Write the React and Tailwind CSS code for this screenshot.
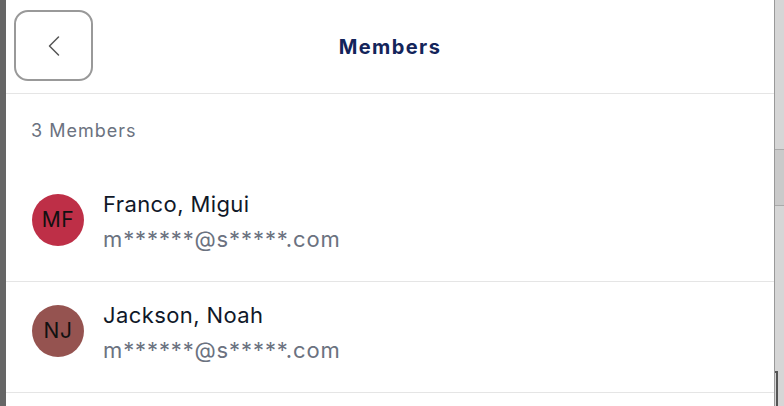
import { ChevronLeft } from "lucide-react";

const members = [
  { initials: "MF", name: "Franco, Migui", email: "m******@s*****.com", color: "bg-[#be2f47]" },
  { initials: "NJ", name: "Jackson, Noah", email: "m******@s*****.com", color: "bg-[#955350]" },
];

const MemberRow = ({ initials, name, email, color }) => (
  <div className="h-[111px] flex items-center gap-[19px] pl-[26px] pb-[10px] border-b border-[#e5e5e5] shrink-0">
    <div className={`w-[52px] h-[52px] mb-[3px] rounded-full ${color} flex items-center justify-center text-[21px] tracking-[0.5px] text-[#111] shrink-0`}>
      {initials}
    </div>
    <div className="flex flex-col gap-[3px]">
      <span className="text-[22px] leading-[32px] tracking-[0.4px] text-[#101828]">{name}</span>
      <span className="text-[22px] leading-[32px] tracking-[0.9px] text-[#6b7280]">{email}</span>
    </div>
  </div>
);

export default function App() {
  return (
    <div className="flex h-[406px] w-[784px] overflow-hidden bg-white" style={{ fontFamily: "Inter, 'Noto Sans', sans-serif" }}>
      {/* left backdrop strip */}
      <div className="w-[6px] bg-[#666]" />

      {/* drawer */}
      <div className="flex-1 flex flex-col">
        <div className="h-[94px] grid grid-cols-[1fr_auto_1fr] items-start border-b border-[#e5e5e5] shrink-0">
          <div className="pl-[8px] pt-[10px]">
            <button className="w-[79px] h-[71px] border-2 border-[#999] rounded-[14px] flex items-center justify-center text-[#555]">
              <ChevronLeft size={36} strokeWidth={1} />
            </button>
          </div>
          <h1 className="self-center text-[20px] font-bold tracking-[1.4px] text-[#13245a]">Members</h1>
          <div />
        </div>

        <div className="h-[77px] shrink-0 pl-[25px] pt-[24px] text-[18px] leading-[26px] tracking-[1px] text-[#6b7280]">3 Members</div>

        {members.map((m) => (
          <MemberRow key={m.initials} {...m} />
        ))}
      </div>

      {/* right backdrop strip */}
      <div className="w-[10px] border-l border-[#999] bg-[#d6d6d6] flex flex-col">
        <div className="h-[150px] border-b border-[#aaa]" />
        <div className="h-[56px] bg-[#cacaca] border-b border-[#aaa]" />
        <div className="h-[165px]" />
        <div className="flex-1 w-[3px] border-t-2 border-r-2 border-[#555]" />
      </div>
    </div>
  );
}
